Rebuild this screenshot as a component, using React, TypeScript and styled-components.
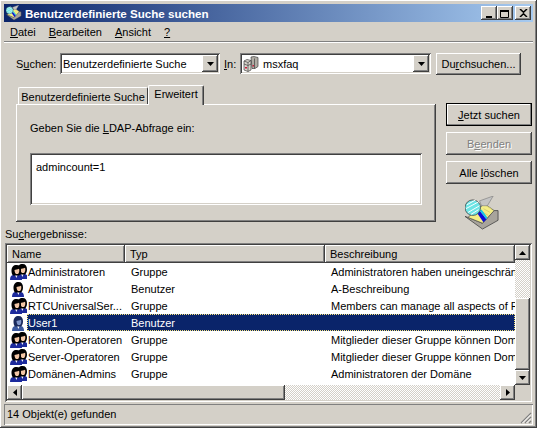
import styled, { createGlobalStyle, css } from "styled-components";

const GlobalStyle = createGlobalStyle`
  html, body { margin: 0; padding: 0; background: #d4d0c8; }
  * { box-sizing: border-box; }
`;

const raised = css`
  box-shadow: inset -1px -1px 0 #404040, inset 1px 1px 0 #fff, inset -2px -2px 0 #808080, inset 2px 2px 0 #d4d0c8;
`;
const sunken = css`
  box-shadow: inset 1px 1px 0 #808080, inset -1px -1px 0 #fff, inset 2px 2px 0 #404040, inset -2px -2px 0 #d4d0c8;
`;
const dither = css`
  background-color: #fff;
  background-image: conic-gradient(#d4d0c8 25%, #fff 0 50%, #d4d0c8 0 75%, #fff 0);
  background-size: 2px 2px;
`;

const Window = styled.div`
  width: 537px;
  height: 428px;
  padding: 4px;
  background: #d4d0c8;
  font: 11px "Liberation Sans", Arial, sans-serif;
  color: #000;
  display: flex;
  flex-direction: column;
  overflow: hidden;
  ${raised}
`;

const TitleBar = styled.div`
  height: 18px;
  flex: none;
  display: flex;
  align-items: center;
  padding: 0 2px;
  gap: 3px;
  background: linear-gradient(90deg, #0a246a, #a6caf0);
  color: #fff;
  font-weight: bold;
  font-size: 11.6px;
`;

const TitleText = styled.span`
  flex: 1;
`;

const CaptionButton = styled.div<{ $gap?: number }>`
  width: 16px;
  height: 14px;
  margin-left: ${(p) => p.$gap ?? 0}px;
  background: #d4d0c8;
  display: flex;
  align-items: center;
  justify-content: center;
  ${raised}
`;

const CaptionGroup = styled.div`
  display: flex;
`;

const MenuBar = styled.div`
  height: 20px;
  flex: none;
  display: flex;
  align-items: center;
  padding-left: 6px;
  gap: 13px;
  border-bottom: 1px solid #808080;
  box-shadow: 0 1px 0 #fff;
  margin-bottom: 1px;
`;

const SearchRow = styled.div`
  display: flex;
  align-items: flex-start;
  flex: none;
  margin: 10px 0 0 12px;
  height: 22px;
`;

const RowLabel = styled.span<{ $w: number; $pad?: number }>`
  width: ${(p) => p.$w}px;
  padding-left: ${(p) => p.$pad ?? 0}px;
  line-height: 22px;
  flex: none;
`;

const Combo = styled.div<{ $w: number }>`
  width: ${(p) => p.$w}px;
  height: 21px;
  flex: none;
  background: #fff;
  display: flex;
  align-items: center;
  padding: 2px 2px 2px 3px;
  gap: 4px;
  ${sunken}
`;

const ComboText = styled.span`
  flex: 1;
  white-space: nowrap;
  overflow: hidden;
`;

const ArrowButton = styled.div`
  width: 16px;
  height: 17px;
  flex: none;
  background: #d4d0c8;
  display: flex;
  align-items: center;
  justify-content: center;
  ${raised}
`;

const Button = styled.div<{ $w?: number; $h?: number; $gap?: number; $default?: boolean; $disabled?: boolean }>`
  width: ${(p) => p.$w ?? 86}px;
  height: ${(p) => p.$h ?? 23}px;
  margin-left: ${(p) => p.$gap ?? 0}px;
  flex: none;
  background: #d4d0c8;
  display: flex;
  align-items: center;
  justify-content: center;
  white-space: pre;
  ${(p) => (p.$disabled ? "color: #808080; text-shadow: 1px 1px 0 #fff;" : "")}
  ${(p) =>
    p.$default
      ? "box-shadow: inset 0 0 0 1px #000, inset -2px -2px 0 #808080, inset 2px 2px 0 #fff;"
      : raised}
`;

const Main = styled.div`
  display: flex;
  flex: none;
  margin: 9px 0 0 12px;
  height: 137px;
`;

const TabArea = styled.div`
  width: 420px;
  flex: none;
  display: flex;
  flex-direction: column;
`;

const TabStrip = styled.div`
  display: flex;
  align-items: flex-end;
  height: 20px;
  flex: none;
  padding-left: 2px;
  position: relative;
  z-index: 1;
`;

const Tab = styled.div<{ $active?: boolean }>`
  height: ${(p) => (p.$active ? 20 : 17)}px;
  width: ${(p) => (p.$active ? 56 : 130)}px;
  padding-bottom: ${(p) => (p.$active ? 3 : 0)}px;
  padding-top: ${(p) => (p.$active ? 0 : 1)}px;
  margin-bottom: ${(p) => (p.$active ? -1 : 0)}px;
  background: #d4d0c8;
  display: flex;
  align-items: center;
  justify-content: center;
  border-radius: 2px 2px 0 0;
  border-top: 1px solid #fff;
  border-left: 1px solid #fff;
  border-right: 1px solid #404040;
  box-shadow: ${(p) => (p.$active ? "inset -1px 0 0 #808080" : "none")};
`;

const TabPanel = styled.div`
  height: 118px;
  flex: none;
  padding: 18px 14px 0 14px;
  ${raised}
`;

const LdapField = styled.div`
  margin-top: 19px;
  width: 392px;
  height: 52px;
  padding: 8px 6px;
  background: #fff;
  ${sunken}
`;

const ActionColumn = styled.div`
  display: flex;
  flex-direction: column;
  gap: 6px;
  margin: 19px 0 0 10px;
`;

const BigIconSlot = styled.div`
  margin: 6px 0 0 19px;
`;

const ResultsLabel = styled.div`
  flex: none;
  margin: 6px 0 2px 1px;
  line-height: 14px;
`;

const ListFrame = styled.div`
  flex: none;
  height: 159px;
  margin: 0 0 0 1px;
  padding: 2px;
  width: 527px;
  display: grid;
  grid-template-columns: 508px 15px;
  grid-template-rows: 140px 15px;
  background: #fff;
  ${sunken}
`;

const ListBody = styled.div`
  overflow: hidden;
  background: #fff;
`;

const HeaderRow = styled.div`
  display: grid;
  grid-template-columns: 118px 200px 190px;
  height: 18px;
`;

const HeaderCell = styled.div`
  background: #d4d0c8;
  padding-left: 5px;
  display: flex;
  align-items: center;
  ${raised}
`;

const Row = styled.div`
  display: flex;
  height: 17px;
  white-space: nowrap;
`;

const IconSlot = styled.div`
  width: 20px;
  flex: none;
  padding-left: 3px;
  display: flex;
  align-items: center;
`;

const RowCells = styled.div<{ $selected?: boolean }>`
  flex: 1;
  min-width: 0;
  display: grid;
  grid-template-columns: 98px 200px 190px;
  align-items: center;
  ${(p) =>
    p.$selected ? "background: #0a246a; color: #fff; outline: 1px dotted #f6e27a; outline-offset: -1px;" : ""}
`;

const NameCell = styled.div`
  padding-left: 1px;
  overflow: hidden;
`;

const TextCell = styled.div`
  padding-left: 6px;
  overflow: hidden;
`;

const VScroll = styled.div`
  display: flex;
  flex-direction: column;
  ${dither}
`;

const HScroll = styled.div`
  display: flex;
  ${dither}
`;

const ScrollButton = styled.div`
  width: 15px;
  height: 15px;
  flex: none;
  background: #d4d0c8;
  display: flex;
  align-items: center;
  justify-content: center;
  ${raised}
`;

const VThumb = styled.div`
  width: 15px;
  height: 72px;
  flex: none;
  margin-top: 38px;
  margin-bottom: auto;
  background: #d4d0c8;
  ${raised}
`;

const HThumb = styled.div`
  width: 263px;
  flex: none;
  margin-right: auto;
  background: #d4d0c8;
  ${raised}
`;

const Corner = styled.div`
  background: #d4d0c8;
`;

const StatusBar = styled.div`
  flex: none;
  height: 21px;
  margin-top: 2px;
  padding: 0 0 1px 3px;
  display: flex;
  align-items: center;
  position: relative;
  box-shadow: inset 1px 1px 0 #808080, inset -1px -1px 0 #fff;
`;

const Grip = styled.svg`
  position: absolute;
  right: 1px;
  bottom: 1px;
`;

const Arrow = ({ dir }: { dir: "up" | "down" | "left" | "right" }) => {
  const pts = {
    up: "3.5,0 7,4 0,4",
    down: "0,0 7,0 3.5,4",
    left: "4,0 4,7 0,3.5",
    right: "0,0 0,7 4,3.5",
  }[dir];
  const vertical = dir === "up" || dir === "down";
  return (
    <svg width={vertical ? 7 : 4} height={vertical ? 4 : 7}>
      <polygon points={pts} fill="#000" />
    </svg>
  );
};

const OnePerson = ({ x = 0, y = 0, dim = false }: { x?: number; y?: number; dim?: boolean }) => (
  <g transform={`translate(${x} ${y})`}>
    <path d="M0 15c0-3 1-4.500 3-5h6c2 .5 3 2 3 5z" fill={dim ? "#3c5aa0" : "#1c2a9c"} />
    <path d="M5 10h2.500l-1 3z" fill="#fff" />
    <path d="M1.500 5.500C1.500 2 3.500 0 6.500 0s4.500 2 4.500 5.500c0 2.500-1 4-2 5H3c-1-1-1.500-2.500-1.500-5z" fill={dim ? "#1a2a5c" : "#000"} />
    <path d="M4.500 5c1.200 0 3-.5 4.500-1.200.5 1.200.5 3.200-.5 4.700-.5.800-2.500.8-3 0-.6-1-1-2.500-1-3.500z" fill={dim ? "#7f95c8" : "#f3c6a5"} />
  </g>
);

const UserIcon = ({ group, dim }: { group?: boolean; dim?: boolean }) => (
  <svg width="17" height="16" viewBox="0 0 17 16">
    {group ? (
      <>
        <OnePerson x={6} y={0} dim={dim} />
        <OnePerson x={0} y={1} dim={dim} />
      </>
    ) : (
      <OnePerson x={2} y={1} dim={dim} />
    )}
  </svg>
);

const ServerIcon = () => (
  <svg width="16" height="16" viewBox="0 0 16 16">
    <path d="M8 1l3-.5 4 1v9l-3 2H9z" fill="#b0aca4" stroke="#404040" strokeWidth=".7" />
    <path d="M1 5l3-1.500 4 1V14l-3 1.500-4-1.500z" fill="#d8d4cc" stroke="#404040" strokeWidth=".7" />
    <path d="M1 5l4 1.500L8 4.500M5 6.500v9M1 8l4 1.500L8 8M11.500 2.500v10" fill="none" stroke="#404040" strokeWidth=".7" />
    <rect x="2" y="11" width="2" height="1.500" fill="#c81e3c" />
    <rect x="9.500" y="9" width="1.500" height="1.500" fill="#c81e3c" />
  </svg>
);

const SearchIcon = ({ size }: { size: number }) => (
  <svg width={size} height={size} viewBox="0 0 36 36">
    <path d="M0 21l18 13 16-9V15l-4 0-12 13-15-6z" fill="#a8a49c" stroke="#404040" strokeWidth=".8" />
    <path d="M20 8l10 7-12 13-15-6z" fill="#f4ee86" stroke="#555" strokeWidth=".8" />
    <path d="M22 10l6 4M19 13l7 4M17 16l7 4" stroke="#d8d070" strokeWidth="1" />
    <path d="M15 5L29 0l-6 10h-6z" fill="#c4c4c4" stroke="#777" strokeWidth=".6" />
    <path d="M12 17l3-2 7 9-3 3z" fill="#0c0cd8" />
    <path d="M15 15l2-1 6 8-1 2z" fill="#16c8e8" />
    <circle cx="8" cy="12" r="8" fill="#6ce4e4" stroke="#444" strokeWidth=".8" />
    <path d="M2 9l9-5M1 13l13-7M3 17l12-7M6 19l8-5" stroke="#fff" strokeWidth="1" />
  </svg>
);

const Mnemonic = styled.span`
  text-decoration: underline;
`;

type Result = { name: string; type: string; desc: string; group: boolean };

const results: Result[] = [
  { name: "Administratoren", type: "Gruppe", desc: "Administratoren haben uneingeschränkten", group: true },
  { name: "Administrator", type: "Benutzer", desc: "A-Beschreibung", group: false },
  { name: "RTCUniversalSer...", type: "Gruppe", desc: "Members can manage all aspects of RTC", group: true },
  { name: "User1", type: "Benutzer", desc: "", group: false },
  { name: "Konten-Operatoren", type: "Gruppe", desc: "Mitglieder dieser Gruppe können Domänen", group: true },
  { name: "Server-Operatoren", type: "Gruppe", desc: "Mitglieder dieser Gruppe können Domänen", group: true },
  { name: "Domänen-Admins", type: "Gruppe", desc: "Administratoren der Domäne", group: true },
];

export default function App() {
  return (
    <>
      <GlobalStyle />
      <Window>
        <TitleBar>
          <SearchIcon size={16} />
          <TitleText>Benutzerdefinierte Suche suchen</TitleText>
          <CaptionGroup>
            <CaptionButton>
              <svg width="8" height="9"><rect x="1" y="7" width="6" height="2" fill="#000" /></svg>
            </CaptionButton>
            <CaptionButton>
              <svg width="10" height="9"><path d="M.5 1.500h8v7h-8z" fill="none" stroke="#000" /><rect y="1" width="9" height="2" /></svg>
            </CaptionButton>
            <CaptionButton $gap={2}>
              <svg width="9" height="8"><path d="M1 0l3.500 3.200L8 0M1 8l3.500-3.200L8 8" fill="none" stroke="#000" strokeWidth="1.500" /></svg>
            </CaptionButton>
          </CaptionGroup>
        </TitleBar>
        <MenuBar>
          <span><Mnemonic>D</Mnemonic>atei</span>
          <span><Mnemonic>B</Mnemonic>earbeiten</span>
          <span><Mnemonic>A</Mnemonic>nsicht</span>
          <span><Mnemonic>?</Mnemonic></span>
        </MenuBar>
        <SearchRow>
          <RowLabel $w={44}>S<Mnemonic>u</Mnemonic>chen:</RowLabel>
          <Combo $w={160}>
            <ComboText>Benutzerdefinierte Suche</ComboText>
            <ArrowButton><Arrow dir="down" /></ArrowButton>
          </Combo>
          <RowLabel $w={20} $pad={4}><Mnemonic>I</Mnemonic>n:</RowLabel>
          <Combo $w={191}>
            <ServerIcon />
            <ComboText>msxfaq</ComboText>
            <ArrowButton><Arrow dir="down" /></ArrowButton>
          </Combo>
          <Button $w={85} $h={22} $gap={5}><span>Du<Mnemonic>r</Mnemonic>chsuchen...</span></Button>
        </SearchRow>
        <Main>
          <TabArea>
            <TabStrip>
              <Tab>Benutzerdefinierte Suche</Tab>
              <Tab $active>Erweitert</Tab>
            </TabStrip>
            <TabPanel>
              <div>Geben Sie die <Mnemonic>L</Mnemonic>DAP-Abfrage ein:</div>
              <LdapField>admincount=1</LdapField>
            </TabPanel>
          </TabArea>
          <ActionColumn>
            <Button $default><span><Mnemonic>J</Mnemonic>etzt suchen</span></Button>
            <Button $disabled><span>B<Mnemonic>e</Mnemonic>enden</span></Button>
            <Button><span>Alle <Mnemonic>l</Mnemonic>öschen</span></Button>
            <BigIconSlot><SearchIcon size={35} /></BigIconSlot>
          </ActionColumn>
        </Main>
        <ResultsLabel>Su<Mnemonic>c</Mnemonic>hergebnisse:</ResultsLabel>
        <ListFrame>
          <ListBody>
            <HeaderRow>
              <HeaderCell>Name</HeaderCell>
              <HeaderCell>Typ</HeaderCell>
              <HeaderCell>Beschreibung</HeaderCell>
            </HeaderRow>
            {results.map((r) => (
              <Row key={r.name}>
                <IconSlot><UserIcon group={r.group} dim={r.name === "User1"} /></IconSlot>
                <RowCells $selected={r.name === "User1"}>
                  <NameCell>{r.name}</NameCell>
                  <TextCell>{r.type}</TextCell>
                  <TextCell>{r.desc}</TextCell>
                </RowCells>
              </Row>
            ))}
          </ListBody>
          <VScroll>
            <ScrollButton><Arrow dir="up" /></ScrollButton>
            <VThumb />
            <ScrollButton><Arrow dir="down" /></ScrollButton>
          </VScroll>
          <HScroll>
            <ScrollButton><Arrow dir="left" /></ScrollButton>
            <HThumb />
            <ScrollButton><Arrow dir="right" /></ScrollButton>
          </HScroll>
          <Corner />
        </ListFrame>
        <StatusBar>
          14 Objekt(e) gefunden
          <Grip width="13" height="13" viewBox="0 0 13 13">
            <path d="M12 2L2 12M12 6l-6 6M12 10l-2 2" stroke="#808080" strokeWidth="1.200" />
            <path d="M12 3.500L3.500 12M12 7.500L7.500 12" stroke="#fff" />
          </Grip>
        </StatusBar>
      </Window>
    </>
  );
}
